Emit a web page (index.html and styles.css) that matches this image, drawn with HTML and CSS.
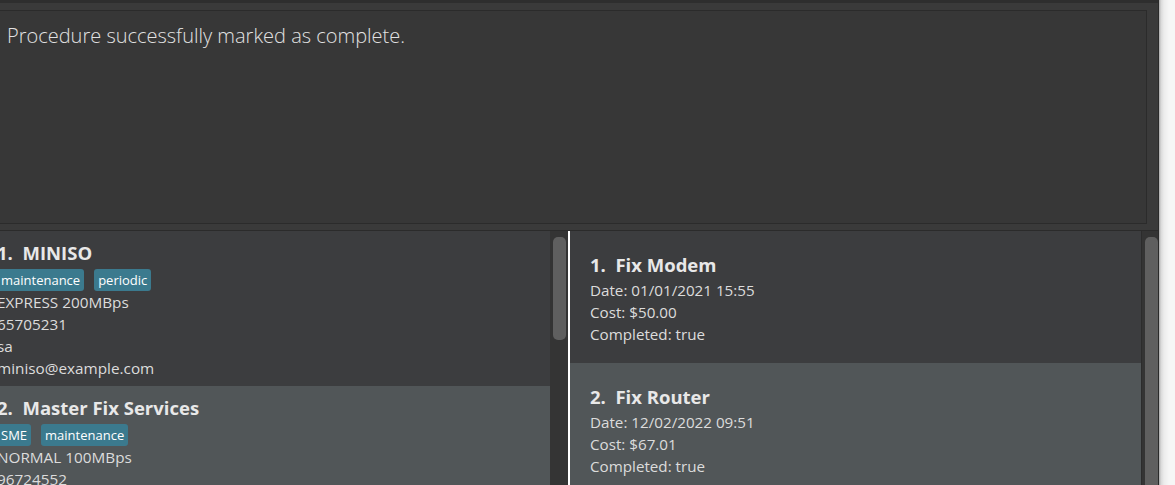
FILE: index.html
```html
<!DOCTYPE html>
<html>
<head>
<meta charset="utf-8">
<link rel="stylesheet" href="styles.css">
</head>
<body>
<div class="window">
  <div class="topbar"></div>
  <div class="result-wrap">
    <div class="result-box">Procedure successfully marked as complete.</div>
  </div>
  <div class="lists">
    <div class="pane pane-left">
      <div class="cells">
        <div class="plist">
          <div class="pcell">
            <div class="title">1.  MINISO</div>
            <div class="tags"><span class="tag">maintenance</span><span class="tag">periodic</span></div>
            <div class="line">EXPRESS 200MBps</div>
            <div class="line">65705231</div>
            <div class="line">sa</div>
            <div class="line">miniso@example.com</div>
          </div>
          <div class="pcell alt">
            <div class="title">2.  Master Fix Services</div>
            <div class="tags"><span class="tag">SME</span><span class="tag">maintenance</span></div>
            <div class="line">NORMAL 100MBps</div>
            <div class="line">96724552</div>
          </div>
        </div>
      </div>
      <div class="track"><div class="thumb thumb-left"></div></div>
    </div>
    <div class="divider"></div>
    <div class="pane pane-right">
      <div class="cells">
        <div class="rcell">
          <div class="title">1.  Fix Modem</div>
          <div class="rline">Date: 01/01/2021 15:55</div>
          <div class="rline">Cost: $50.00</div>
          <div class="rline">Completed: true</div>
        </div>
        <div class="rcell alt">
          <div class="title">2.  Fix Router</div>
          <div class="rline">Date: 12/02/2022 09:51</div>
          <div class="rline">Cost: $67.01</div>
          <div class="rline">Completed: true</div>
        </div>
      </div>
      <div class="track track-right"><div class="thumb thumb-right"></div></div>
    </div>
  </div>
</div>
<div class="shadow"></div>
</body>
</html>
```
FILE: styles.css
```css
html, body {
  margin: 0;
  padding: 0;
}
body {
  width: 1175px;
  height: 485px;
  overflow: hidden;
  display: flex;
  background: #f4f4f4;
  font-family: "Open Sans", "Noto Sans", sans-serif;
  color: #dedede;
}
.window {
  width: 1159px;
  height: 485px;
  box-sizing: border-box;
  background: #3a3a3a;
  border-right: 1px solid #2a2a2a;
  display: flex;
  flex-direction: column;
  overflow: hidden;
}
.shadow {
  flex: 1;
  background: linear-gradient(to right, #a9a9a9 0px, #d9d9d9 2px, #ececec 5px, #f6f6f6 10px);
}
.topbar {
  height: 3px;
  background: #2e2e2e;
  flex-shrink: 0;
}
.result-wrap {
  padding: 7px 11px 6px 0;
  flex-shrink: 0;
}
.result-box {
  margin-left: -2px;
  height: 214px;
  box-sizing: border-box;
  border: 1px solid #2b2b2b;
  background: #373737;
  padding: 11px 8px;
  font-size: 20px;
  font-weight: 300;
  line-height: 28px;
  color: #e2e2e2;
}
.lists {
  flex: 1;
  min-height: 0;
  display: flex;
  border-top: 1px solid #2b2b2b;
}
.pane {
  display: flex;
  min-height: 0;
}
.pane-left {
  width: 568px;
}
.pane-right {
  flex: 1;
}
.cells {
  flex: 1;
  overflow: hidden;
  background: #3c3d3f;
}
.plist {
  margin-left: -3px;
}
.pcell {
  padding: 9px 0 7px 0;
  background: #3c3d3f;
}
.alt {
  background: #515658;
}
.title {
  white-space: pre;
  font-size: 18.5px;
  font-weight: 700;
  line-height: 26px;
  color: #e8e8e8;
}
.tags {
  display: flex;
  gap: 10px;
  margin-top: 3px;
}
.tag {
  background: #3b7a8e;
  color: #ffffff;
  font-size: 13px;
  line-height: 22px;
  padding: 0 4px;
  border-radius: 3px;
}
.line {
  font-size: 15.3px;
  line-height: 22px;
  color: #dcdcdc;
}
.rcell {
  padding: 20px 20px 18px;
  background: #3c3d3f;
}
.rcell.alt {
  background: #515658;
}
.rcell .title {
  line-height: 28px;
}
.rline {
  font-size: 15.2px;
  line-height: 22px;
  color: #dcdcdc;
}
.divider {
  width: 2px;
  background: #ffffff;
  flex-shrink: 0;
}
.track {
  width: 18px;
  flex-shrink: 0;
  background: #343434;
  padding-top: 6px;
  box-sizing: border-box;
}
.track-right {
  width: 17px;
  border-left: 1px solid #2c2c2c;
}
.thumb {
  width: 13px;
  background: #5f5f5f;
  border-radius: 5px;
}
.thumb-left {
  margin-left: 3px;
  height: 103px;
}
.thumb-right {
  margin-left: 3px;
  height: 300px;
  border-radius: 5px 5px 0 0;
}
```
